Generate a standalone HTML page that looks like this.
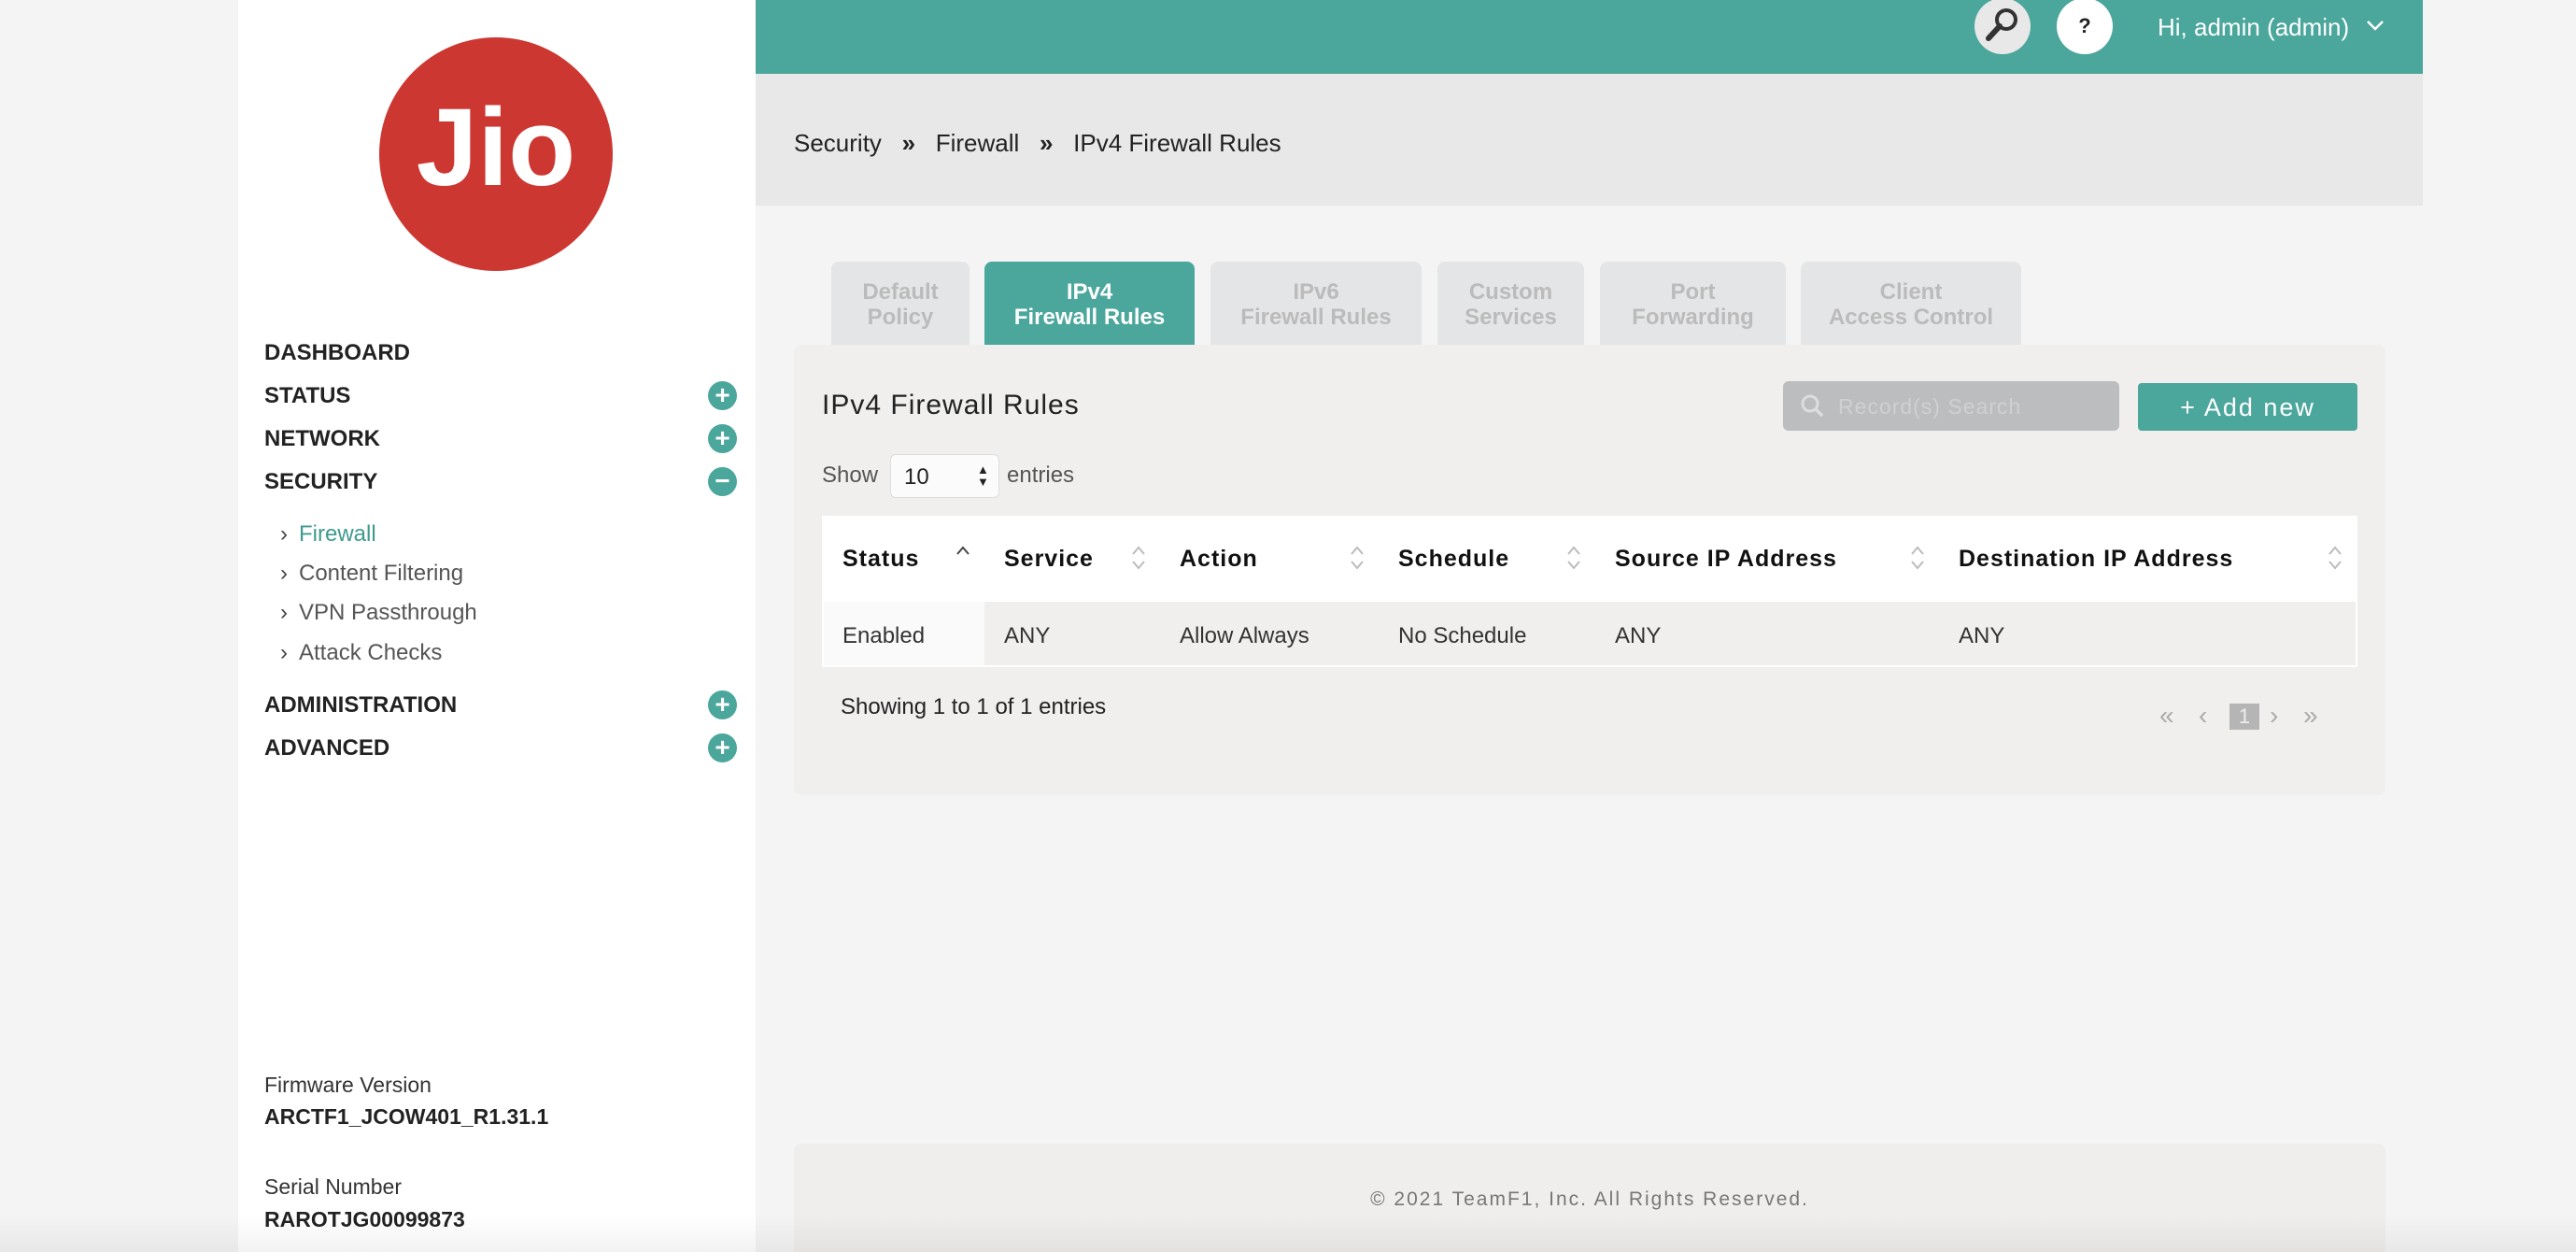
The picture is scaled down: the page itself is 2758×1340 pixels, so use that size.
<!DOCTYPE html>
<html><head><meta charset="utf-8"><style>
*{margin:0;padding:0;box-sizing:border-box}
body{width:2758px;height:1340px;background:#f4f4f4;font-family:"Liberation Sans",sans-serif;position:relative;overflow:hidden;color:#222}
.a{position:absolute;white-space:nowrap}
#side{left:255px;top:0;width:554px;height:1340px;background:#fff}
.nav{font-weight:bold;font-size:24px;color:#222;left:283px}
.sub{font-size:24px;color:#555;left:300px}
.sub:before{content:"›";margin-right:12px;color:#444}
.pl{left:758px;width:31px;height:31px;border-radius:50%;background:#4ba69c;color:#fff;font-weight:bold;font-size:28px;line-height:30px;text-align:center}
.tab{top:280px;height:89px;background:#e4e5e7;border-radius:8px 8px 0 0;color:#bbb;font-weight:bold;font-size:24px;text-align:center;line-height:27px;padding-top:19px}
.th{top:584px;font-weight:bold;font-size:25px;color:#111;letter-spacing:1px}
.td{top:667px;font-size:24px;color:#333}
.srt{top:580px}
</style></head><body>
<div id="side" class="a"></div>
<div class="a" style="left:406px;top:40px;width:250px;height:250px;border-radius:50%;background:#cd3731"></div>
<div class="a" style="left:406px;top:90px;width:250px;text-align:center;color:#fff;font-weight:bold;font-size:118px;letter-spacing:0px">Jio</div>
<div class="a nav" style="top:364px">DASHBOARD</div>
<div class="a nav" style="top:410px">STATUS</div>
<div class="a nav" style="top:456px">NETWORK</div>
<div class="a nav" style="top:502px">SECURITY</div>
<div class="a nav" style="top:741px">ADMINISTRATION</div>
<div class="a nav" style="top:787px">ADVANCED</div>
<div class="a pl" style="top:408px">+</div>
<div class="a pl" style="top:454px">+</div>
<div class="a pl" style="top:500px">−</div>
<div class="a pl" style="top:739px">+</div>
<div class="a pl" style="top:785px">+</div>
<div class="a sub" style="top:558px;color:#3e9a8f">Firewall</div>
<div class="a sub" style="top:600px">Content Filtering</div>
<div class="a sub" style="top:642px">VPN Passthrough</div>
<div class="a sub" style="top:685px">Attack Checks</div>
<div class="a" style="left:283px;top:1148px;font-size:23px;color:#333">Firmware Version</div>
<div class="a" style="left:283px;top:1182px;font-size:23px;font-weight:bold">ARCTF1_JCOW401_R1.31.1</div>
<div class="a" style="left:283px;top:1257px;font-size:23px;color:#333">Serial Number</div>
<div class="a" style="left:283px;top:1292px;font-size:23px;font-weight:bold">RAROTJG00099873</div>

<div class="a" style="left:809px;top:0;width:1785px;height:79px;background:#4ba69c"></div>
<div class="a" style="left:2114px;top:-2px;width:60px;height:60px;border-radius:50%;background:#e8e8e8"></div>
<svg class="a" style="left:2124px;top:6px" width="40" height="40" viewBox="0 0 40 40"><circle cx="24" cy="15" r="10" fill="none" stroke="#333" stroke-width="4"/><line x1="17" y1="22" x2="5" y2="35" stroke="#333" stroke-width="6" stroke-linecap="round"/></svg>
<div class="a" style="left:2202px;top:-2px;width:60px;height:60px;border-radius:50%;background:#fff;text-align:center;line-height:60px;font-weight:bold;font-size:22px">?</div>
<div class="a" style="left:2310px;top:14px;font-size:26px;color:#fff">Hi, admin (admin)</div>
<svg class="a" style="left:2533px;top:20px" width="20" height="14"><path d="M2 3l8 8 8-8" fill="none" stroke="#fff" stroke-width="2.5"/></svg>

<div class="a" style="left:809px;top:79px;width:1785px;height:141px;background:#e8e8e8"></div>
<div class="a" style="left:850px;top:138px;font-size:26px;color:#222">Security &nbsp;&nbsp;<b>»</b>&nbsp;&nbsp; Firewall &nbsp;&nbsp;<b>»</b>&nbsp;&nbsp; IPv4 Firewall Rules</div>

<div class="a tab" style="left:890px;width:148px">Default<br>Policy</div>
<div class="a tab" style="left:1054px;width:225px;background:#4ba69c;color:#fff">IPv4<br>Firewall Rules</div>
<div class="a tab" style="left:1296px;width:226px">IPv6<br>Firewall Rules</div>
<div class="a tab" style="left:1539px;width:157px">Custom<br>Services</div>
<div class="a tab" style="left:1713px;width:199px">Port<br>Forwarding</div>
<div class="a tab" style="left:1928px;width:236px">Client<br>Access Control</div>

<div class="a" style="left:850px;top:369px;width:1704px;height:482px;background:#f0efee;border-radius:8px"></div>
<div class="a" style="left:880px;top:417px;font-size:30px;color:#222;letter-spacing:1px">IPv4 Firewall Rules</div>
<div class="a" style="left:1909px;top:408px;width:360px;height:53px;background:#bcbdbf;border-radius:6px"></div>
<svg class="a" style="left:1926px;top:420px" width="30" height="30"><circle cx="12" cy="12" r="8" fill="none" stroke="#ddd" stroke-width="3"/><line x1="18" y1="18" x2="25" y2="25" stroke="#ddd" stroke-width="3.5"/></svg>
<div class="a" style="left:1968px;top:422px;font-size:23px;color:#d0d0d2;letter-spacing:1px">Record(s) Search</div>
<div class="a" style="left:2289px;top:410px;width:235px;height:51px;background:#4ba69c;border-radius:4px;color:#fff;font-size:27px;text-align:center;line-height:53px;letter-spacing:2px">+ Add new</div>

<div class="a" style="left:880px;top:495px;font-size:24px;color:#555">Show</div>
<div class="a" style="left:953px;top:486px;width:117px;height:47px;background:#fbfbfb;border:1px solid #ddd;border-radius:6px;font-size:24px;padding:10px 14px">10</div>
<div class="a" style="left:1046px;top:496px;font-size:13px;line-height:13px">▲<br>▼</div>
<div class="a" style="left:1078px;top:495px;font-size:24px;color:#555">entries</div>

<div class="a" style="left:880px;top:552px;width:1644px;height:162px;background:#fff"></div>
<div class="a" style="left:1054px;top:644px;width:1468px;height:68px;background:#f0efee"></div>
<div class="a" style="left:882px;top:644px;width:172px;height:68px;background:#fafafa"></div>
<div class="a th" style="left:902px">Status</div>
<div class="a th" style="left:1075px">Service</div>
<div class="a th" style="left:1263px">Action</div>
<div class="a th" style="left:1497px">Schedule</div>
<div class="a th" style="left:1729px">Source IP Address</div>
<div class="a th" style="left:2097px">Destination IP Address</div>
<svg class="a srt" style="left:1021px" width="20" height="34"><path d="M4 13l6-7 6 7" fill="none" stroke="#444" stroke-width="2"/></svg>
<svg class="a srt" style="left:1209px" width="20" height="34"><path d="M4 13l6-7 6 7M4 21l6 7 6-7" fill="none" stroke="#bbb" stroke-width="2"/></svg>
<svg class="a srt" style="left:1443px" width="20" height="34"><path d="M4 13l6-7 6 7M4 21l6 7 6-7" fill="none" stroke="#bbb" stroke-width="2"/></svg>
<svg class="a srt" style="left:1675px" width="20" height="34"><path d="M4 13l6-7 6 7M4 21l6 7 6-7" fill="none" stroke="#bbb" stroke-width="2"/></svg>
<svg class="a srt" style="left:2043px" width="20" height="34"><path d="M4 13l6-7 6 7M4 21l6 7 6-7" fill="none" stroke="#bbb" stroke-width="2"/></svg>
<svg class="a srt" style="left:2490px" width="20" height="34"><path d="M4 13l6-7 6 7M4 21l6 7 6-7" fill="none" stroke="#bbb" stroke-width="2"/></svg>
<div class="a td" style="left:902px">Enabled</div>
<div class="a td" style="left:1075px">ANY</div>
<div class="a td" style="left:1263px">Allow Always</div>
<div class="a td" style="left:1497px">No Schedule</div>
<div class="a td" style="left:1729px">ANY</div>
<div class="a td" style="left:2097px">ANY</div>

<div class="a" style="left:900px;top:743px;font-size:24px;color:#222">Showing 1 to 1 of 1 entries</div>
<div class="a" style="left:2312px;top:750px;font-size:28px;color:#aaa">«</div>
<div class="a" style="left:2354px;top:750px;font-size:28px;color:#aaa">‹</div>
<div class="a" style="left:2387px;top:753px;width:32px;height:28px;background:#b5b5b5;color:#eee;text-align:center;font-size:22px;line-height:28px">1</div>
<div class="a" style="left:2430px;top:750px;font-size:28px;color:#aaa">›</div>
<div class="a" style="left:2466px;top:750px;font-size:28px;color:#aaa">»</div>

<div class="a" style="left:850px;top:1224px;width:1704px;height:116px;background:#efeeec;border-radius:8px 8px 0 0"></div>
<div class="a" style="left:850px;top:1272px;width:1704px;text-align:center;font-size:21px;color:#777;letter-spacing:2px">© 2021 TeamF1, Inc. All Rights Reserved.</div>
<div class="a" style="left:0;top:1300px;width:2758px;height:40px;background:linear-gradient(rgba(0,0,0,0),rgba(0,0,0,0.05))"></div>
</body></html>
